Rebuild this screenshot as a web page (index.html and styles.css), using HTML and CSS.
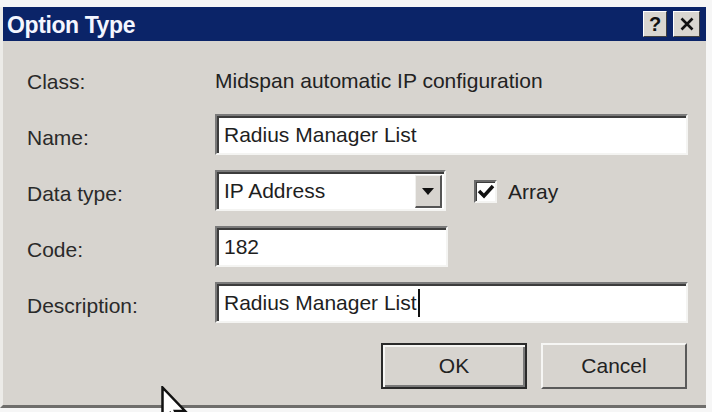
FILE: index.html
```html
<!DOCTYPE html>
<html>
<head>
<meta charset="utf-8">
<link rel="stylesheet" href="styles.css">
</head>
<body>
<div class="dialog">
  <div class="titlebar">
    <span class="title">Option Type</span>
    <div class="tbtns">
      <div class="tbtn">?</div>
      <div class="tbtn x">
        <svg width="14" height="14" viewBox="0 0 14 14"><path d="M1.5 1.5 L12.5 12.5 M12.5 1.5 L1.5 12.5" stroke="#111" stroke-width="2.6"/></svg>
      </div>
    </div>
  </div>
  <div class="content">
    <div class="row r-class">
      <div class="label">Class:</div>
      <div class="value">Midspan automatic IP configuration</div>
    </div>
    <div class="row r-name">
      <div class="label">Name:</div>
      <div class="field wide">Radius Manager List</div>
    </div>
    <div class="row r-type">
      <div class="label">Data type:</div>
      <div class="field select">
        <span class="seltext">IP Address</span>
        <div class="dropbtn"><svg width="12" height="7" viewBox="0 0 12 7"><path d="M0 0 H12 L6 7 Z" fill="#111"/></svg></div>
      </div>
      <div class="check">
        <div class="box"><svg width="18" height="16" viewBox="0 0 18 16"><path d="M2 7 L7 12 L16 2" fill="none" stroke="#111" stroke-width="3.5"/></svg></div>
        <span class="checklabel">Array</span>
      </div>
    </div>
    <div class="row r-code">
      <div class="label">Code:</div>
      <div class="field code">182</div>
    </div>
    <div class="row r-desc">
      <div class="label">Description:</div>
      <div class="field wide">Radius Manager List<span class="caret"></span></div>
    </div>
    <div class="buttons">
      <div class="btn default">OK</div>
      <div class="btn">Cancel</div>
    </div>
  </div>
</div>
<svg class="pointer" width="30" height="40" viewBox="0 0 30 40"><path d="M1.5 1.5 L1.5 34 L9 27 L14 38 L19 36 L14 25 L24 25 Z" fill="#fff" stroke="#111" stroke-width="2.5" stroke-linejoin="miter"/></svg>
</body>
</html>
```
FILE: styles.css
```css
html, body {
  margin: 0;
  padding: 0;
  background: #f6f6f6;
}
body {
  width: 712px;
  height: 412px;
  overflow: hidden;
  position: relative;
  font-family: "Liberation Sans", Arial, sans-serif;
}
.dialog {
  margin-top: 7px;
  width: 703px;
  height: 398px;
  background: #d7d4cf;
  border-left: 3px solid #ecebe8;
  border-bottom: 3px solid #6f6e6c;
  display: flex;
  flex-direction: column;
}
.titlebar {
  height: 34px;
  background: #0b2468;
  display: flex;
  align-items: center;
  justify-content: space-between;
  padding: 0 6px 0 4px;
  flex: none;
}
.title {
  color: #f4f6ff;
  font-weight: bold;
  font-size: 23px;
  letter-spacing: -0.4px;
  transform: scaleY(1.08);
}
.tbtns {
  display: flex;
  gap: 6px;
}
.tbtn {
  width: 24px;
  height: 26px;
  background: #d9d6d0;
  border-top: 1px solid #fff;
  border-left: 1px solid #fff;
  border-right: 1px solid #404040;
  border-bottom: 1px solid #404040;
  box-sizing: border-box;
  display: flex;
  align-items: center;
  justify-content: center;
  font-weight: bold;
  font-size: 20px;
  color: #111;
}
.tbtn.x {
  width: 27px;
}
.content {
  padding: 17px 0 0 24px;
  display: flex;
  flex-direction: column;
}
.row {
  display: flex;
  align-items: center;
  height: 41px;
  margin-bottom: 15px;
}
.label {
  width: 188px;
  font-size: 21px;
  color: #2a2a2a;
  flex: none;
  padding-top: 6px;
}
.value {
  font-size: 21px;
  color: #222;
  padding-top: 5px;
}
.field {
  height: 41px;
  box-sizing: border-box;
  background: #fff;
  border-top: 2px solid #7a7a7a;
  border-left: 2px solid #7a7a7a;
  border-right: 2px solid #f4f4f2;
  border-bottom: 2px solid #f4f4f2;
  box-shadow: inset 2px 2px 0 #3c3c3c;
  font-size: 21px;
  color: #1e1e1e;
  display: flex;
  align-items: center;
  padding-left: 7px;
  padding-top: 1px;
  position: relative;
}
.wide {
  width: 473px;
}
.code {
  width: 233px;
}
.select {
  width: 231px;
  justify-content: space-between;
  padding-right: 2px;
}
.dropbtn {
  width: 27px;
  height: 33px;
  box-sizing: border-box;
  background: #d7d4cf;
  border-top: 1px solid #f0f0ee;
  border-left: 1px solid #f0f0ee;
  border-right: 2px solid #555;
  border-bottom: 2px solid #555;
  display: flex;
  align-items: center;
  justify-content: center;
  margin-top: 1px;
}
.check {
  display: flex;
  align-items: center;
  margin-left: 28px;
  gap: 11px;
  padding-top: 2px;
}
.box {
  width: 23px;
  height: 23px;
  box-sizing: border-box;
  background: #fff;
  border-top: 2px solid #6a6a6a;
  border-left: 2px solid #6a6a6a;
  border-right: 2px solid #f4f4f2;
  border-bottom: 2px solid #f4f4f2;
  box-shadow: inset 1px 1px 0 #3c3c3c;
  display: flex;
  align-items: center;
  justify-content: center;
}
.checklabel {
  font-size: 21px;
  color: #222;
}
.caret {
  display: inline-block;
  width: 2px;
  height: 28px;
  background: #111;
  margin-left: 1px;
}
.buttons {
  display: flex;
  gap: 14px;
  margin-left: 354px;
  margin-top: 5px;
}
.btn {
  width: 146px;
  height: 46px;
  box-sizing: border-box;
  background: #d7d4cf;
  border-top: 2px solid #f6f6f4;
  border-left: 2px solid #f6f6f4;
  border-right: 2px solid #5a5a5a;
  border-bottom: 2px solid #5a5a5a;
  display: flex;
  align-items: center;
  justify-content: center;
  font-size: 21px;
  color: #222;
}
.btn.default {
  border: 2px solid #2a2a2a;
  box-shadow: inset 2px 2px 0 #f6f6f4, inset -2px -2px 0 #7a7a7a;
}
.pointer {
  position: absolute;
  left: 161px;
  top: 386px;
}
```
